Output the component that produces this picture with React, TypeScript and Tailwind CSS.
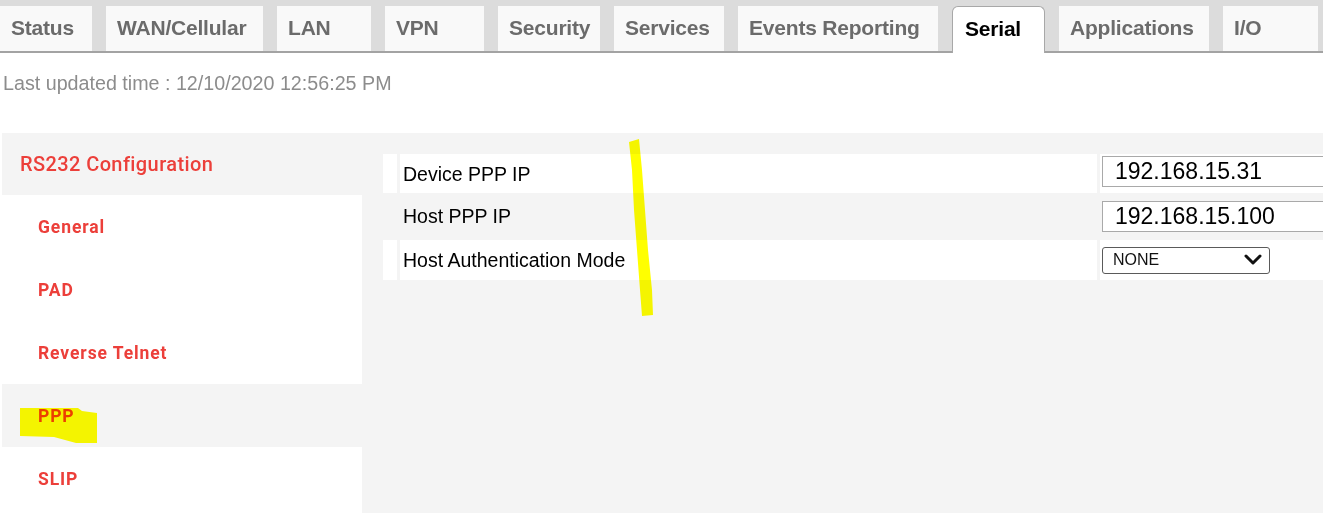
import React from "react";

const tabs: { label: string; w: string; active?: boolean }[] = [
  { label: "Status", w: "w-[92px]" },
  { label: "WAN/Cellular", w: "w-[157px]" },
  { label: "LAN", w: "w-[94px]" },
  { label: "VPN", w: "w-[99px]" },
  { label: "Security", w: "w-[102px]" },
  { label: "Services", w: "w-[110px]" },
  { label: "Events Reporting", w: "w-[200px]" },
  { label: "Serial", w: "w-[93px]", active: true },
  { label: "Applications", w: "w-[150px]" },
  { label: "I/O", w: "w-[95px]" },
  { label: "", w: "w-[60px]" },
];

const menu: { label: string; active?: boolean }[] = [
  { label: "General" },
  { label: "PAD" },
  { label: "Reverse Telnet" },
  { label: "PPP", active: true },
  { label: "SLIP" },
];

export default function App() {
  return (
    <div className="relative w-[1323px] h-[513px] overflow-hidden bg-white font-['Liberation_Sans',Arial,sans-serif]">
      {/* Tab bar */}
      <div className="flex items-end gap-[14px] h-[53px] bg-[#dcdcdc] border-b-[2px] border-[#a3a3a3] whitespace-nowrap">
        {tabs.map((t, i) =>
          t.active ? (
            <div
              key={i}
              className={`${t.w} shrink-0 h-[47px] -mb-[2px] flex items-center pl-[12px] pb-[2px] bg-white border border-b-0 border-[#a8a8a8] rounded-t-[6px] text-[21px] font-bold tracking-[-0.2px] text-black`}
            >
              {t.label}
            </div>
          ) : (
            <div
              key={i}
              className={`${t.w} shrink-0 h-[45px] flex items-center pl-[11px] pb-[2px] bg-[#f9f9f9] text-[21px] font-bold tracking-[-0.2px] text-[#6b6b6b]`}
            >
              {t.label}
            </div>
          )
        )}
      </div>

      {/* Last updated */}
      <div className="h-[80px] pt-[18px] pl-[3px] text-[19.7px] leading-[24px] text-[#8c8c8c]">
        Last updated time : 12/10/2020 12:56:25 PM
      </div>

      {/* Panel */}
      <div className="ml-[2px] flex h-[380px] bg-[#f4f4f4]">
        {/* Sidebar */}
        <div className="w-[360px] shrink-0 flex flex-col font-['Roboto','Open_Sans',sans-serif]">
          <div className="h-[62px] flex items-center pl-[18px] text-[20px] font-medium tracking-[0.4px] text-[#ec3f3a]">
            RS232 Configuration
          </div>
          {menu.map((m) => (
            <div
              key={m.label}
              className={`h-[63px] flex items-center pl-[36px] pt-[2px] text-[17.5px] font-bold tracking-[0.9px] text-[#ec3f3a] ${
                m.active ? "bg-[#f4f4f4]" : "bg-white"
              }`}
            >
              {m.label}
            </div>
          ))}
          <div className="flex-1 bg-white" />
        </div>

        {/* Content */}
        <div className="flex-1 pl-[21px] pt-[21px] flex flex-col">
          {/* Row 1 */}
          <div className="h-[39px] flex gap-[3px]">
            <div className="w-[14px] bg-white" />
            <div className="w-[697px] bg-white flex items-center pl-[3px] pt-[2px] text-[19.5px] text-black">
              Device PPP IP
            </div>
            <div className="flex-1 bg-white flex items-center pl-[2px] pb-[4px]">
              <div className="w-[260px] h-[31px] shrink-0 bg-white border border-[#a9a9a9] flex items-center pl-[12px] text-[23px] text-black">
                192.168.15.31
              </div>
            </div>
          </div>
          {/* Row 2 */}
          <div className="h-[47px] flex gap-[3px]">
            <div className="w-[14px]" />
            <div className="w-[697px] flex items-center pl-[3px] text-[19.5px] text-black">
              Host PPP IP
            </div>
            <div className="flex-1 flex items-center pl-[2px]">
              <div className="w-[260px] h-[31px] shrink-0 bg-white border border-[#a9a9a9] flex items-center pl-[12px] text-[23px] text-black">
                192.168.15.100
              </div>
            </div>
          </div>
          {/* Row 3 */}
          <div className="h-[40px] flex gap-[3px]">
            <div className="w-[14px] bg-white" />
            <div className="w-[697px] bg-white flex items-center pl-[3px] pt-[2px] text-[19.5px] text-black">
              Host Authentication Mode
            </div>
            <div className="flex-1 bg-white flex items-center pl-[2px]">
              <div className="w-[168px] h-[27px] shrink-0 bg-white border border-[#5a5a5a] rounded-[3px] flex items-center justify-between pl-[10px] pr-[7px] text-[16px] text-[#111]">
                <span>NONE</span>
                <svg width="18" height="12" viewBox="0 0 18 12">
                  <path d="M2 2 L9 9 L16 2" fill="none" stroke="#111" strokeWidth="3" strokeLinecap="round" strokeLinejoin="round" />
                </svg>
              </div>
            </div>
          </div>
        </div>
      </div>

      {/* Yellow highlighter annotations */}
      <svg className="absolute left-0 top-0 pointer-events-none mix-blend-multiply" width="1323" height="513" viewBox="0 0 1323 513">
        <polygon
          points="20,408 78,408 82,411 97,413 97,443 76,443 65,440 54,437 20,436"
          fill="#ffff00"
        />
        <polygon
          points="629,142 639,139 642,170 645,210 648,250 652,290 653,315 642,316 640,290 637,250 634,210 632,170"
          fill="#ffff00"
        />
      </svg>
    </div>
  );
}
